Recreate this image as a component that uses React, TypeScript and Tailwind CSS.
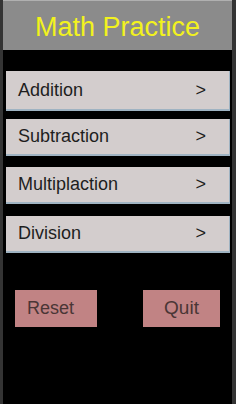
import React from "react";

const items = [
  { label: "Addition", h: "h-[40px]", mt: "mt-[21px]" },
  { label: "Subtraction", h: "h-[37px]", mt: "mt-[8px]" },
  { label: "Multiplaction", h: "h-[37px]", mt: "mt-[11px]" },
  { label: "Division", h: "h-[37px]", mt: "mt-[12px]" },
];

export default function App() {
  return (
    <div
      className="w-[236px] h-[404px] bg-black border-l-[3px] border-r-[4px] border-[#343434] flex flex-col overflow-hidden"
      style={{ fontFamily: '"Liberation Sans", Arial, sans-serif' }}
    >
      <div className="h-[50px] shrink-0 bg-[#8b8b8b] border-t border-[#b0b0b0] flex items-center justify-center">
        <span className="text-[27px] leading-none text-[#f2f21e] mt-[3px]">Math Practice</span>
      </div>
      <div className="flex flex-col pl-[3px] pr-[2px]">
        {items.map((it) => (
          <div
            key={it.label}
            className={`${it.h} ${it.mt} bg-[#d3cdcd] border-b-2 border-r border-[#9fb3c2] flex items-center justify-between pl-[12px] pr-[23px]`}
          >
            <span className="text-[18px] text-[#1e1e1e]">{it.label}</span>
            <span className="text-[18px] text-[#1e1e1e]">&gt;</span>
          </div>
        ))}
      </div>
      <div className="flex mt-[37px] pl-[12px]">
        <div className="w-[82px] h-[37px] bg-[#c18384] flex items-center pl-[12px]">
          <span className="text-[18px] text-[#4a3636]">Reset</span>
        </div>
        <div className="w-[77px] h-[37px] bg-[#c18384] flex items-center justify-center ml-[46px]">
          <span className="text-[19px] text-[#4a3636]">Quit</span>
        </div>
      </div>
    </div>
  );
}
